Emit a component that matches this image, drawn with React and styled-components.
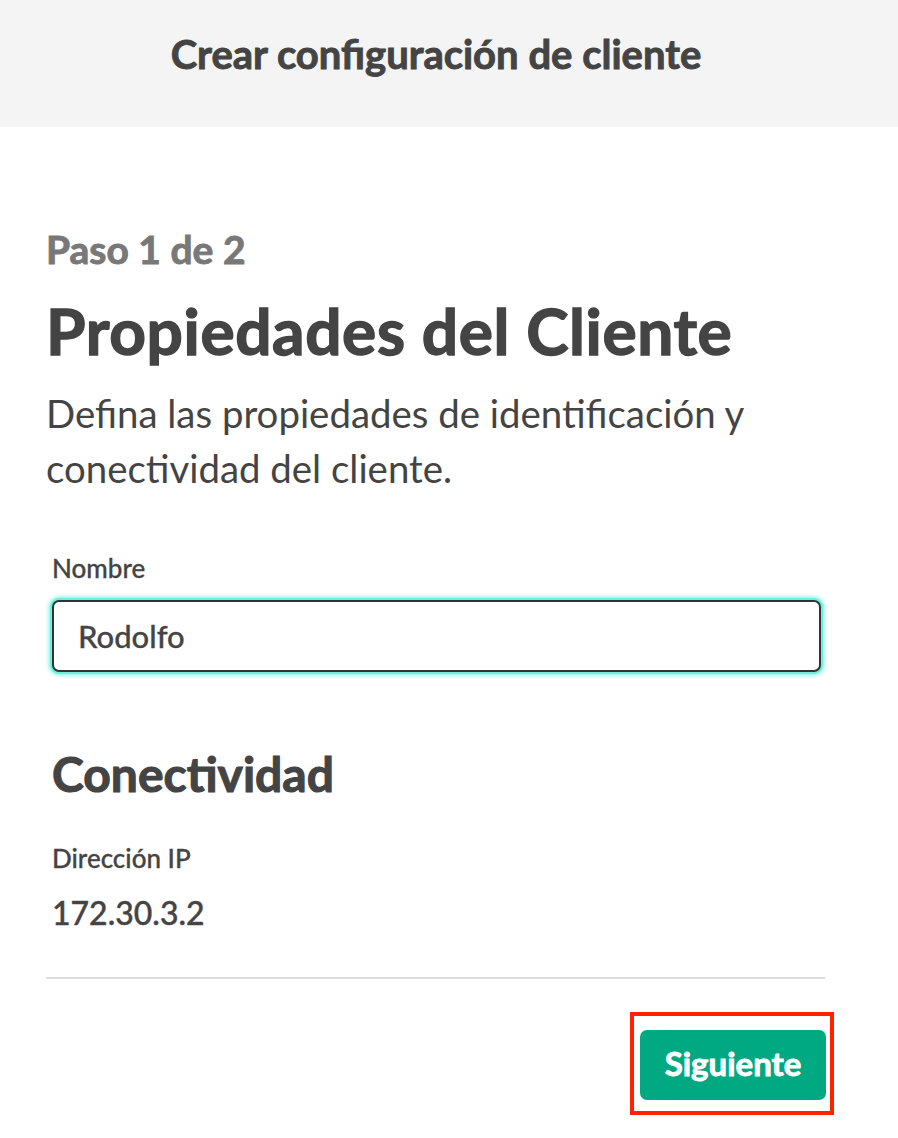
import React from "react";
import styled, { createGlobalStyle } from "styled-components";

const Global = createGlobalStyle`
  html, body { margin: 0; padding: 0; background: #ffffff; }
  body { font-family: Lato, "Noto Sans", sans-serif; color: #444444; }
  * { box-sizing: border-box; }
`;

const Page = styled.div`
  width: 898px;
  min-height: 1138px;
  display: flex;
  flex-direction: column;
`;

const Header = styled.header`
  height: 127px;
  background: #f4f4f4;
  display: flex;
  justify-content: center;
  padding: 30px 26px 0 0;
`;

const HeaderTitle = styled.h1`
  margin: 0;
  font-size: 40px;
  line-height: 48px;
  font-weight: 700;
  color: #444444;
  -webkit-text-stroke: 0.9px #444444;
`;

const Main = styled.main`
  padding: 99px 73px 0 46px;
  display: flex;
  flex-direction: column;
`;

const Step = styled.div`
  font-size: 39px;
  line-height: 47px;
  font-weight: 700;
  color: #787878;
  -webkit-text-stroke: 0.9px #787878;
`;

const Title = styled.h2`
  margin: 19px 0 0;
  font-size: 64px;
  line-height: 77px;
  font-weight: 700;
  color: #444444;
  letter-spacing: 0.6px;
  -webkit-text-stroke: 1.4px #444444;
`;

const Description = styled.p`
  margin: 17px 0 0;
  font-size: 38.4px;
  line-height: 55px;
  font-weight: 400;
  color: #444444;
`;

const Form = styled.div`
  margin-top: 56px;
  padding-left: 6px;
  display: flex;
  flex-direction: column;
`;

const Field = styled.div`
  margin-top: ${(p) => p.$mt || 0}px;
  display: flex;
  flex-direction: column;
`;

const Label = styled.label`
  font-size: 26px;
  line-height: 32px;
  font-weight: 500;
  color: #444444;
  -webkit-text-stroke: 0.3px #444444;
`;

const Input = styled.input`
  margin-top: 16px;
  width: 769px;
  height: 72px;
  border: 2px solid #333333;
  border-radius: 7px;
  padding: 0 24px;
  font-family: Lato, "Noto Sans", sans-serif;
  font-size: 31px;
  font-weight: 500;
  color: #444444;
  background: #ffffff;
  outline: none;
  -webkit-text-stroke: 0.3px #444444;
  box-shadow: 0 0 0 2px #6cf0dc, 0 0 4px 3px rgba(0, 228, 200, 0.55);
`;

const SectionTitle = styled.h3`
  margin: 73px 0 0;
  font-size: 48px;
  line-height: 58px;
  font-weight: 700;
  color: #444444;
  -webkit-text-stroke: 1.1px #444444;
`;

const Value = styled.div`
  margin-top: 20px;
  font-size: 32px;
  line-height: 38px;
  font-weight: 500;
  color: #444444;
  -webkit-text-stroke: 0.4px #444444;
`;

const Divider = styled.hr`
  margin: 45px 0 0;
  border: none;
  height: 2px;
  background: #dddddd;
`;

const Footer = styled.div`
  display: flex;
  justify-content: flex-end;
  margin-top: 33px;
  margin-right: -9px;
`;

const Highlight = styled.div`
  border: 4px solid #ff2200;
  padding: 14px 4px 11px 6px;
`;

const Button = styled.button`
  display: block;
  width: 186px;
  height: 70px;
  border: none;
  border-radius: 7px;
  background: #01a982;
  color: #ffffff;
  font-family: Lato, "Noto Sans", sans-serif;
  font-size: 33px;
  font-weight: 700;
  padding: 0 0 4px;
  cursor: pointer;
  -webkit-text-stroke: 0.9px #ffffff;
`;

export default function App() {
  return (
    <Page>
      <Global />
      <Header>
        <HeaderTitle>Crear configuración de cliente</HeaderTitle>
      </Header>
      <Main>
        <Step>Paso 1 de 2</Step>
        <Title>Propiedades del Cliente</Title>
        <Description>
          Defina las propiedades de identificación y<br />conectividad del cliente.
        </Description>
        <Form>
          <Field>
            <Label htmlFor="nombre">Nombre</Label>
            <Input id="nombre" defaultValue="Rodolfo" />
          </Field>
          <SectionTitle>Conectividad</SectionTitle>
          <Field $mt={39}>
            <Label>Dirección IP</Label>
            <Value>172.30.3.2</Value>
          </Field>
        </Form>
        <Divider />
        <Footer>
          <Highlight>
            <Button>Siguiente</Button>
          </Highlight>
        </Footer>
      </Main>
    </Page>
  );
}
